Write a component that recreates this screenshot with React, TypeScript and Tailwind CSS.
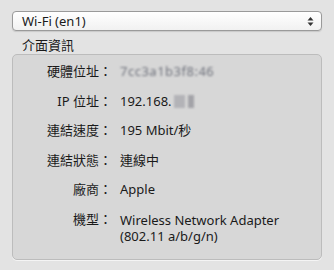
const rows: { label: string; value: React.ReactNode }[] = [
  {
    label: '硬體位址：',
    value: (
      <span className="text-[#6f727c] blur-[1px] tracking-[0.5px]">7cc3a1b3f8:46</span>
    ),
  },
  {
    label: 'IP 位址：',
    value: (
      <span className="flex items-center">
        192.168.
        <span className="ml-[2px] inline-block h-[13px] w-[11px] bg-[#b3b3b7] blur-[0.8px]" />
        <span className="ml-[3px] inline-block h-[13px] w-[6px] bg-[#a3a3a8] blur-[0.8px]" />
      </span>
    ),
  },
  { label: '連結速度：', value: '195 Mbit/秒' },
  { label: '連結狀態：', value: '連線中' },
  { label: '廠商：', value: 'Apple' },
  {
    label: '機型：',
    value: (
      <div className="flex flex-col leading-[16px]">
        <span>Wireless Network Adapter</span>
        <span>(802.11 a/b/g/n)</span>
      </div>
    ),
  },
]

const App = () => {
  return (
    <div
      className="h-[270px] w-[334px] bg-[#e3e3e3] px-[12px] pt-[11px] text-[13px] text-[#1a1a1a]"
      style={{ fontFamily: '"Noto Sans", "Noto Sans CJK TC", sans-serif' }}
    >
      <div className="flex h-[20px] items-center justify-between rounded-[4px] border border-[#9a9a9a] bg-gradient-to-b from-white to-[#f1f1f1] pl-[9px] pr-[7px] shadow-[0_1px_1px_rgba(0,0,0,0.12)]">
        <span className="leading-[16px]">Wi-Fi (en1)</span>
        <svg width="7" height="11" viewBox="0 0 7 11">
          <path d="M3.5 1 L6.5 4.5 L0.5 4.5 Z" fill="#333" />
          <path d="M3.5 10 L6.5 6.5 L0.5 6.5 Z" fill="#333" />
        </svg>
      </div>

      <div className="mt-[6px] pl-[10px] leading-[16px]">介面資訊</div>

      <div className="mt-[1px] h-[206px] rounded-[5px] border border-[#bcbcbc] bg-[#d7d7d7] pt-[9px] shadow-[0_1px_0_rgba(255,255,255,0.6)]">
        <div className="flex flex-col gap-[14.5px]">
          {rows.map((r) => (
            <div key={r.label} className="flex leading-[15px]">
              <div className="w-[99px] shrink-0 text-right">{r.label}</div>
              <div className="ml-[8px]">{r.value}</div>
            </div>
          ))}
        </div>
      </div>
    </div>
  )
}

export default App
